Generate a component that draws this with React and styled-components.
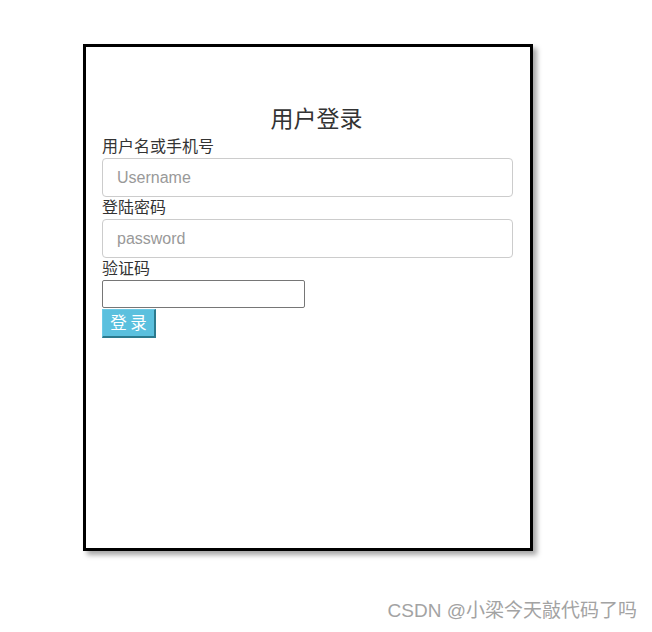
import React from "react";
import styled, { createGlobalStyle } from "styled-components";

const GlobalStyle = createGlobalStyle`
  body {
    margin: 0;
    background: #fff;
    font-family: "Liberation Sans", "Noto Sans CJK SC", sans-serif;
    color: #333;
  }
`;

const Page = styled.div`
  width: 652px;
  height: 632px;
  padding: 44px 0 0 83px;
  box-sizing: border-box;
  display: flex;
  flex-direction: column;
`;

const Card = styled.div`
  width: 450px;
  height: 507px;
  box-sizing: border-box;
  border: 3px solid #000;
  box-shadow: 4px 4px 5px rgba(0, 0, 0, 0.35);
  padding: 59px 16px 0 16px;
  display: flex;
  flex-direction: column;
  align-items: flex-start;
`;

const Title = styled.h3`
  align-self: stretch;
  margin: 0;
  padding-left: 17px;
  height: 30px;
  line-height: 26px;
  font-size: 23px;
  font-weight: 400;
  text-align: center;
  color: #333;
`;

const Label = styled.label`
  display: block;
  font-size: 16px;
  line-height: 22px;
  color: #333;
`;

const TextInput = styled.input`
  display: block;
  width: 411px;
  height: 39px;
  box-sizing: border-box;
  padding: 0 14px;
  border: 1px solid #ccc;
  border-radius: 4px;
  font-family: "Liberation Sans", sans-serif;
  font-size: 16px;
  color: #555;
  outline: none;
  &::placeholder {
    color: #999;
  }
`;

const CodeInput = styled.input`
  display: block;
  width: 203px;
  height: 28px;
  box-sizing: border-box;
  border: 1px solid #767676;
  border-radius: 2px;
  padding: 0 4px;
  font-size: 14px;
  outline: none;
`;

const SubmitButton = styled.button`
  display: block;
  margin-top: 1px;
  width: 54px;
  height: 29px;
  box-sizing: border-box;
  padding: 0 0 2px;
  background: #5bc0de;
  border-style: solid;
  border-width: 1px 2px 2px 1px;
  border-color: #6ccae6 #2b7a8e #2b7a8e #6ccae6;
  color: #fff;
  font-family: "Noto Sans CJK SC", sans-serif;
  font-size: 16.5px;
  line-height: 24px;
  cursor: pointer;
`;

const Footer = styled.div`
  flex: 1;
  display: flex;
  justify-content: flex-end;
  align-items: flex-end;
  padding: 0 15px 9px 0;
`;

const Watermark = styled.span`
  font-size: 19px;
  line-height: 24px;
  color: #a3a3a3;
  text-shadow: 0 0 1px #fff;
`;

export default function App() {
  return (
    <>
      <GlobalStyle />
      <Page>
        <Card>
          <Title>用户登录</Title>
          <Label>用户名或手机号</Label>
          <TextInput type="text" placeholder="Username" />
          <Label>登陆密码</Label>
          <TextInput type="password" placeholder="password" />
          <Label>验证码</Label>
          <CodeInput type="text" />
          <SubmitButton>登 录</SubmitButton>
        </Card>
        <Footer>
          <Watermark>CSDN @小梁今天敲代码了吗</Watermark>
        </Footer>
      </Page>
    </>
  );
}
